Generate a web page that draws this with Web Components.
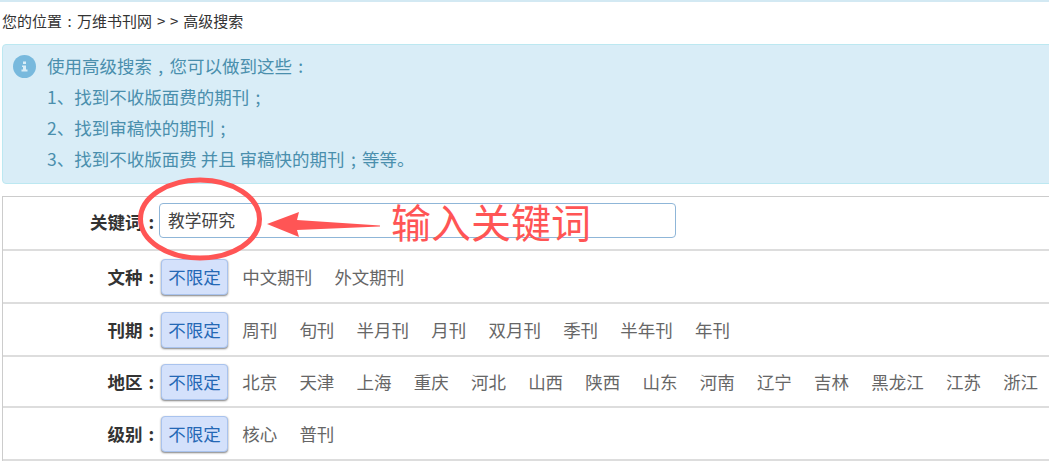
<!DOCTYPE html>
<html lang="zh"><head><meta charset="utf-8">
<style>
html,body{margin:0;height:468px;overflow:hidden;background:#fff}
body{font-family:"Noto Sans CJK SC","Liberation Sans",sans-serif;position:relative}
</style></head><body>
<search-page></search-page>
<script>
const def=(n,h)=>customElements.define(n,class extends HTMLElement{constructor(){super();this.attachShadow({mode:'open'}).innerHTML=h}});
def('p-m',`<style>:host{display:inline-block;width:1em;text-align:center}</style><slot></slot>`);
def('top-rule',`<style>:host{display:block;height:2px;background:#d3e9f3}</style>`);
def('bread-crumb',`<style>:host{display:block;height:42px;padding-left:2px;font-size:15px;line-height:38px;color:#333;box-sizing:border-box;white-space:pre;word-spacing:1.500px}</style><slot></slot>`);
def('info-alert',`<style>:host{display:flex;box-sizing:border-box;height:140px;margin:0 -40px 12px 2px;padding:5px 0 0 10px;background:#d9edf7;border:1px solid #bce8f1;border-radius:4px;color:#4a8fad;font-size:17.5px;line-height:31px;white-space:pre}
svg{flex:none;margin:5px 11px 0 0}</style>
<svg width="23" height="23" viewBox="0 0 23 23"><circle cx="11.5" cy="11.5" r="11.5" fill="#78b9dd"/><path d="M10 6.500h3v2.500h-3zM9 10.500h4v4h1.500v2h-6v-2H10V12H9z" fill="#d9edf7"/></svg><div><slot></slot></div>`);
def('filter-table',`<style>:host{display:block;margin-right:-40px;margin-left:2px;border:1px solid #ccc;border-bottom:0;border-right:0}</style><slot></slot>`);
def('filter-row',`<style>:host{display:flex;align-items:center;box-sizing:border-box;border-bottom:2px solid #ddd;font-size:17.5px;color:#666;white-space:nowrap}
.l{width:157px;flex:none;text-align:right;font-weight:700;color:#333}
.c{display:flex;align-items:center;gap:22.2px;margin-left:1px}</style><div class="l"><slot name="label"></slot></div><div class="c"><slot></slot></div>`);
def('pick-button',`<style>:host{display:block;box-sizing:border-box;height:36px;width:67px;margin:1px -8px 0 0;text-align:center;line-height:33px;background:#d4e1fb;border:1px solid #a9c3ee;border-radius:4px;box-shadow:0 1px 2px rgba(0,0,0,.5);color:#2468b5}</style><slot></slot>`);
def('key-input',`<style>:host{display:block;box-sizing:border-box;width:517px;height:35px;margin:-5px 0 0 -2px;padding-left:8px;border:1px solid #8fb6d8;border-radius:4px;font-size:16.75px;line-height:33px;color:#444}</style><slot></slot>`);
def('call-out',`<style>:host{position:absolute;left:0;top:170px;width:620px;height:100px;pointer-events:none}
svg{position:absolute;left:0;top:0}
.t{position:absolute;left:391px;top:25px;font-size:40px;line-height:52px;color:#f55;white-space:nowrap}</style>
<svg width="620" height="100"><ellipse cx="200" cy="49" rx="59.500" ry="39" fill="none" stroke="#f55" stroke-width="5"/><path d="M267 54L299 42L297 50L380 55.500L380 56.500L297 60L299 67Z" fill="#f55"/></svg><div class="t"><slot></slot></div>`);
const row=(h,label,items)=>`<filter-row style="height:${h}px"><span slot="label">${label}<p-m>:</p-m></span><pick-button>不限定</pick-button>${items.map(i=>`<span>${i}</span>`).join('')}</filter-row>`;
def('search-page',`<style>:host{display:block}</style>
<top-rule></top-rule>
<bread-crumb>您的位置<p-m>:</p-m>万维书刊网 &gt; &gt; 高级搜索</bread-crumb>
<info-alert>使用高级搜索<p-m>,</p-m>您可以做到这些<p-m>:</p-m><br>1、找到不收版面费的期刊<p-m>;</p-m><br>2、找到审稿快的期刊<p-m>;</p-m><br>3、找到不收版面费 并且 审稿快的期刊<p-m>;</p-m>等等。</info-alert>
<filter-table>
<filter-row style="height:54px"><span slot="label" style="margin-top:-3px;display:block">关键词<p-m>:</p-m></span><key-input>教学研究</key-input></filter-row>
${row(53,'文种',['中文期刊','外文期刊'])}
${row(53,'刊期',['周刊','旬刊','半月刊','月刊','双月刊','季刊','半年刊','年刊'])}
${row(51,'地区',['北京','天津','上海','重庆','河北','山西','陕西','山东','河南','辽宁','吉林','黑龙江','江苏','浙江'])}
${row(53,'级别',['核心','普刊'])}
</filter-table>
<call-out>输入关键词</call-out>`);
</script></body></html>
